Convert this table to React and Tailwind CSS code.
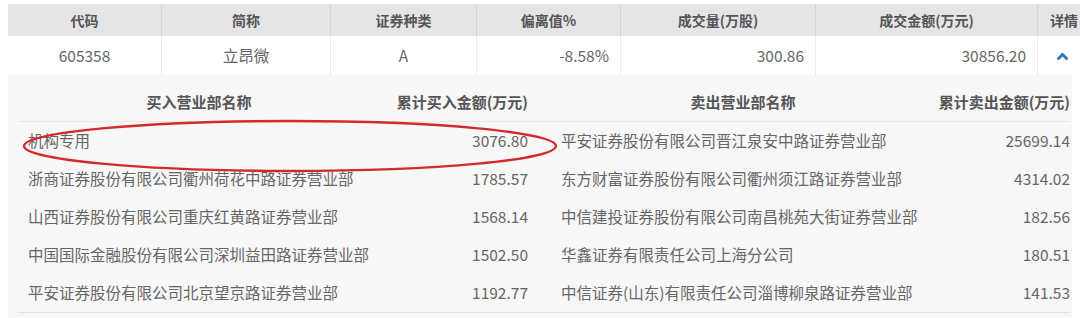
const buys = [
  ["机构专用", "3076.80"],
  ["浙商证券股份有限公司衢州荷花中路证券营业部", "1785.57"],
  ["山西证券股份有限公司重庆红黄路证券营业部", "1568.14"],
  ["中国国际金融股份有限公司深圳益田路证券营业部", "1502.50"],
  ["平安证券股份有限公司北京望京路证券营业部", "1192.77"],
];

const sells = [
  ["平安证券股份有限公司晋江泉安中路证券营业部", "25699.14"],
  ["东方财富证券股份有限公司衢州须江路证券营业部", "4314.02"],
  ["中信建投证券股份有限公司南昌桃苑大街证券营业部", "182.56"],
  ["华鑫证券有限责任公司上海分公司", "180.51"],
  ["中信证券(山东)有限责任公司淄博柳泉路证券营业部", "141.53"],
];

const font = { fontFamily: '"Noto Sans CJK SC", "Noto Sans", sans-serif' };

export default function App() {
  return (
    <div
      className="relative h-[318px] w-[1080px] overflow-hidden bg-white pl-[8px] pt-[4px]"
      style={font}
    >
      {/* main header */}
      <div className="grid h-[32px] w-[1128px] grid-cols-[154px_169px_146px_144px_195px_222px_98px] bg-[#e5e5e5] text-[14px] font-bold text-[#555]">
        {["代码", "简称", "证券种类", "偏离值%", "成交量(万股)", "成交金额(万元)"].map((h) => (
          <div key={h} className="flex items-center justify-center border-r border-[#d3d3d3]">
            {h}
          </div>
        ))}
        <div className="flex items-center pl-[12px]">详情</div>
      </div>

      {/* data row */}
      <div className="grid h-[39px] w-[1064px] grid-cols-[154px_169px_146px_144px_195px_222px_34px] bg-white text-[15.5px] text-[#666]">
        <div className="flex items-center justify-center border-r border-[#ececec]">605358</div>
        <div className="flex items-center justify-center border-r border-[#ececec]">立昂微</div>
        <div className="flex items-center justify-center border-r border-[#ececec]">A</div>
        <div className="flex items-center justify-end border-r border-[#ececec] pr-[11px]">-8.58%</div>
        <div className="flex items-center justify-end border-r border-[#ececec] pr-[11px]">300.86</div>
        <div className="flex items-center justify-end border-r border-[#ececec] pr-[11px]">30856.20</div>
        <div className="flex items-center pl-[19px]">
          <svg width="11" height="8" viewBox="0 0 11 8">
            <polyline points="1.5,6.5 5.5,2.5 9.5,6.5" fill="none" stroke="#2f72b8" strokeWidth="2.8" strokeLinecap="square" />
          </svg>
        </div>
      </div>

      {/* detail panel */}
      <div className="h-[243px] w-[1064px] bg-[#f7f7f7] pl-[10px] pr-[2px] pt-[8px]">
        <div className="grid h-[39px] grid-cols-[362px_160px_406px_124px] border-b border-[#e6e6e6] text-[15px] font-bold text-[#555]">
          <div className="flex items-center justify-center">买入营业部名称</div>
          <div className="flex items-center justify-end whitespace-nowrap pr-[12px]">累计买入金额(万元)</div>
          <div className="flex items-center justify-center">卖出营业部名称</div>
          <div className="flex items-center justify-end whitespace-nowrap">累计卖出金额(万元)</div>
        </div>
        <div className="border-b border-[#e3e3e3]">
          {buys.map((b, i) => (
            <div
              key={i}
              className="grid h-[38px] grid-cols-[362px_160px_406px_124px] text-[15.5px] text-[#666]"
            >
              <div className="flex items-center whitespace-nowrap pl-[10px]">{b[0]}</div>
              <div className="flex items-center justify-end pr-[12px]">{b[1]}</div>
              <div className="flex items-center whitespace-nowrap pl-[21px]">{sells[i][0]}</div>
              <div className="flex items-center justify-end">{sells[i][1]}</div>
            </div>
          ))}
        </div>
      </div>

      {/* hand-drawn red ellipse */}
      <svg className="pointer-events-none absolute left-0 top-0" width="1080" height="318">
        <ellipse cx="290" cy="146" rx="266" ry="25" fill="none" stroke="#d42a2a" strokeWidth="2.4" />
      </svg>
    </div>
  );
}
